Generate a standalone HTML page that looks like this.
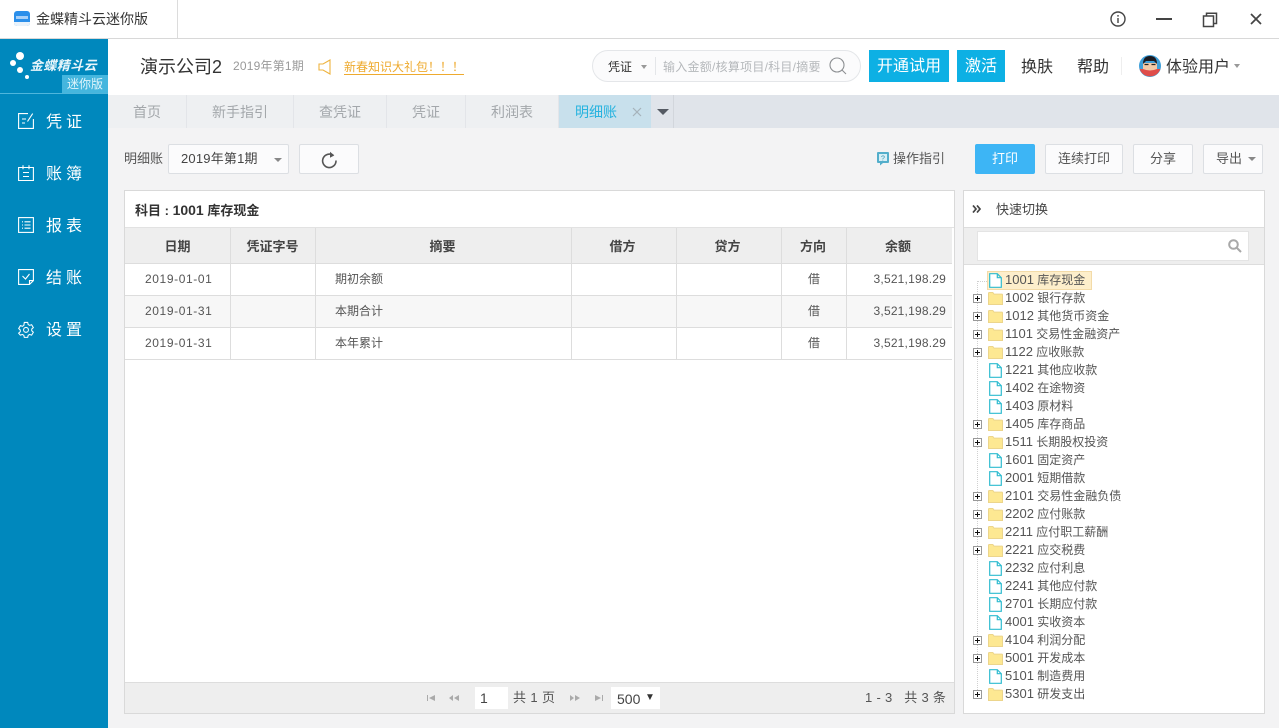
<!DOCTYPE html>
<html lang="zh">
<head>
<meta charset="utf-8">
<title>金蝶精斗云迷你版</title>
<style>
html,body{margin:0;padding:0}
body{width:1279px;height:728px;overflow:hidden;position:relative;background:#f3f3f4;font-family:"Liberation Sans","Noto Sans CJK SC",sans-serif;color:#333}
div,span,svg{position:absolute;box-sizing:border-box}
i{font-style:normal}
.t{white-space:nowrap;line-height:20px;height:20px}
.c{text-align:center}
.tab{top:95px;height:33px;background:#eef0f2;border-right:1px solid #e3e5e9;color:#a3a7ab;font-size:14px;line-height:34px;text-align:center}
.btn{background:#fbfbfc;border:1px solid #dcdfe3;border-radius:2px;font-size:13px;color:#555;text-align:center}
.blue{background:#0db0e4;color:#fff;font-size:16px;text-align:center;line-height:34px;height:32px;top:50px}
.nav{left:46px;color:#fff;font-size:16px;letter-spacing:4px;height:24px;line-height:24px;white-space:nowrap}
.th{top:228px;height:36px;line-height:37px;font-size:13px;text-align:center;color:#444;font-weight:bold;background:#eeeeee;border-right:1px solid #dddddd;border-bottom:1px solid #dddddd;padding-right:2px}
.row{left:125px;width:827px;height:32px;border-bottom:1px solid #dddddd}
.v{top:0;bottom:0;width:1px;background:#dddddd}
.cell{top:0;font-size:12px;line-height:31px;color:#555;white-space:nowrap}
.d{letter-spacing:.6px}
.a{letter-spacing:.2px}
.tn{left:1005px;font-size:12px;line-height:18px;height:18px;white-space:nowrap;color:#555}
.tn i{font-size:13px}
</style>
</head>
<body>
<svg width="0" height="0" style="left:0;top:0">
<defs>
<symbol id="folder" viewBox="0 0 15 13"><path d="M.5 12.5V1.2q0-.7.7-.7h3.6l1.2 1.6h8q.5 0 .5.6v9.8z" fill="#fde892" stroke="#ecd58c"/></symbol>
<symbol id="file" viewBox="0 0 13 15"><path d="M.7.7h7.6l4 4v9.6H.7zM8.3.7v4h4" fill="#fff" stroke="#2fbcd0" stroke-width="1.2"/></symbol>
<symbol id="plus" viewBox="0 0 9 9"><rect x=".5" y=".5" width="8" height="8" fill="#fff" stroke="#999"/><path d="M2 4.5h5M4.5 2v5" stroke="#111"/></symbol>
</defs>
</svg>

<!-- title bar -->
<div style="left:0;top:0;width:1279px;height:39px;background:#fff;border-bottom:1px solid #d8d8d8"></div>
<div style="left:177px;top:0;width:1px;height:38px;background:#dcdcdc"></div>
<div style="left:14px;top:11px;width:16px;height:15px;background:#2b8fea;border-radius:3px"></div>
<div style="left:14px;top:22px;width:16px;height:4px;background:#e8f2fb;border-radius:0 0 3px 3px"></div>
<div style="left:16px;top:16px;width:12px;height:3px;background:#a8d0f8"></div>
<div class="t" style="left:36px;top:9px;font-size:14px;color:#333">金蝶精斗云迷你版</div>
<svg style="left:1110px;top:11px" width="16" height="16" viewBox="0 0 16 16" fill="none" stroke="#444" stroke-width="1.4"><circle cx="8" cy="8" r="7"/><path d="M8 7v5M8 4v1.6"/></svg>
<div style="left:1156px;top:18px;width:16px;height:2px;background:#444"></div>
<svg style="left:1202px;top:12px" width="16" height="16" viewBox="0 0 16 16" fill="none" stroke="#444" stroke-width="1.5"><rect x="1.5" y="4" width="10" height="10.5"/><path d="M4.5 4V1.2h10v10.3h-3"/></svg>
<svg style="left:1250px;top:13px" width="12" height="12" viewBox="0 0 12 12" fill="none" stroke="#444" stroke-width="1.7"><path d="M1 1l10 10M11 1L1 11"/></svg>

<!-- header -->
<div style="left:108px;top:39px;width:1171px;height:56px;background:#fff"></div>
<div class="t" style="left:140px;top:56px;font-size:18px;line-height:22px;height:22px;color:#333">演示公司2</div>
<div class="t" style="left:233px;top:56px;font-size:12px;color:#999;letter-spacing:.2px">2019年第1期</div>
<svg style="left:318px;top:59px" width="13" height="16" viewBox="0 0 13 16" fill="none" stroke="#eeb33f" stroke-width="1.1"><path d="M12 1v14L5 11H1V5h4z"/></svg>
<div class="t" style="left:344px;top:57px;font-size:12px;color:#eeaa2e;border-bottom:1px solid #eeaa2e;height:18px;line-height:20px">新春知识大礼包！！！</div>
<div style="left:592px;top:50px;width:269px;height:32px;border:1px solid #e4e6e9;border-radius:16px;background:#fbfbfc"></div>
<div class="t" style="left:608px;top:57px;font-size:12px;color:#333">凭证</div>
<div style="left:641px;top:65px;border:3px solid transparent;border-top:4px solid #999;border-bottom:0"></div>
<div style="left:655px;top:57px;width:1px;height:18px;background:#e4e6e9"></div>
<div class="t" style="left:663px;top:57px;font-size:12px;color:#b5b8bb;letter-spacing:.25px">输入金额/核算项目/科目/摘要</div>
<svg style="left:829px;top:57px" width="18" height="18" viewBox="0 0 18 18" fill="none" stroke="#8c8f92" stroke-width="1.1"><circle cx="8" cy="8" r="7"/><path d="M13 13l4 4"/></svg>
<div class="blue" style="left:869px;width:80px">开通试用</div>
<div class="blue" style="left:957px;width:48px">激活</div>
<div class="t" style="left:1021px;top:58px;font-size:16px;color:#333">换肤</div>
<div class="t" style="left:1077px;top:58px;font-size:16px;color:#333">帮助</div>
<div style="left:1121px;top:57px;width:1px;height:18px;background:#eeeeee"></div>
<svg style="left:1139px;top:55px" width="22" height="22" viewBox="0 0 22 22"><circle cx="11" cy="11" r="11" fill="#3f9fd8"/><path d="M0.6 14h20.8A11 11 0 0 1 .6 14z" fill="#df4d4a"/><path d="M4 8h14v6q-7 3-14 0z" fill="#f3c9a6"/><path d="M4 9Q4 1 11 1t7 8l-3-3H7z" fill="#1b1b22"/><path d="M5.5 9.5h4M12.5 9.5h4" stroke="#222" stroke-width="1.2"/></svg>
<div class="t" style="left:1166px;top:58px;font-size:16px;color:#333">体验用户</div>
<div style="left:1234px;top:64px;border:3px solid transparent;border-top:4px solid #999;border-bottom:0"></div>

<!-- sidebar -->
<div style="left:0;top:39px;width:108px;height:689px;background:#0088bd"></div>
<div style="left:0;top:93px;width:108px;height:1px;background:#4fb6dc"></div>
<div style="left:16px;top:52px;width:8px;height:8px;border-radius:50%;background:#fff"></div>
<div style="left:10px;top:60px;width:6px;height:6px;border-radius:50%;background:#fff"></div>
<div style="left:17px;top:67px;width:6px;height:6px;border-radius:50%;background:#fff"></div>
<div style="left:25px;top:75px;width:4px;height:4px;border-radius:50%;background:#fff"></div>
<div class="t" style="left:30px;top:55px;font-size:13px;line-height:21px;color:#e8f6fb;font-style:italic;font-weight:bold;letter-spacing:.4px">金蝶精斗云</div>
<div class="c" style="left:62px;top:75px;width:46px;height:18px;background:#45b6de;color:#dff4fb;font-size:12px;line-height:19px">迷你版</div>

<svg style="left:18px;top:113px" width="16" height="16" viewBox="0 0 16 16" fill="none" stroke="#fff" stroke-width="1.1"><path d="M10 .6H.6v14.8h14.8V6M4 6h4M4 10h3M9.5 8.5L14.7.6"/></svg>
<div class="nav" style="top:111px">凭证</div>
<svg style="left:18px;top:165px" width="16" height="16" viewBox="0 0 16 16" fill="none" stroke="#fff" stroke-width="1.1"><path d="M.6 2.5h14.8v13H.6zM5 .3v4M11 .3v4M5 7.5h6M5 11.5h6"/></svg>
<div class="nav" style="top:163px">账簿</div>
<svg style="left:18px;top:217px" width="16" height="16" viewBox="0 0 16 16" fill="none" stroke="#fff" stroke-width="1.1"><rect x=".6" y=".6" width="14.8" height="14.8"/><path d="M4 4.8h1M6.5 4.8h6M4 8h1M6.5 8h6M4 11.2h1M6.5 11.2h6"/></svg>
<div class="nav" style="top:215px">报表</div>
<svg style="left:18px;top:269px" width="16" height="16" viewBox="0 0 16 16" fill="none" stroke="#fff" stroke-width="1.1"><path d="M11.5 15.4H.6V.6h14.8v11l-3.9 3.8v-3.8h3.9M4.5 7l3 3 4-5"/></svg>
<div class="nav" style="top:267px">结账</div>
<svg style="left:18px;top:321px" width="16" height="17" viewBox="0 0 17 17" fill="none" stroke="#fff" stroke-width="1.1"><path d="M6.7 1h3.6l.5 2.2 1.5.9 2.2-.7 1.8 3.1-1.7 1.5v1.9l1.7 1.5-1.8 3.1-2.2-.7-1.5.9-.5 2.2H6.7l-.5-2.2-1.5-.9-2.2.7L.7 12.4l1.7-1.5V9L.7 7.5l1.8-3.1 2.2.7 1.5-.9z"/><circle cx="8.5" cy="8.9" r="2.6"/></svg>
<div class="nav" style="top:319px">设置</div>

<!-- tabs -->
<div style="left:108px;top:95px;width:1171px;height:33px;background:#e0e4ea"></div>
<div class="tab" style="left:108px;width:79px">首页</div>
<div class="tab" style="left:187px;width:107px">新手指引</div>
<div class="tab" style="left:294px;width:93px">查凭证</div>
<div class="tab" style="left:387px;width:79px">凭证</div>
<div class="tab" style="left:466px;width:93px">利润表</div>
<div class="tab" style="left:559px;width:92px;background:#c8e0ec;color:#27b3df;border:0;text-align:left;padding-left:16px">明细账</div>
<svg style="left:632px;top:107px" width="10" height="10" viewBox="0 0 10 10" fill="none" stroke="#a6b3bb" stroke-width="1.2"><path d="M1 1l8 8M9 1L1 9"/></svg>
<div style="left:651px;top:95px;width:23px;height:33px;border-right:1px solid #d2d6dc"></div>
<div style="left:657px;top:109px;border:6px solid transparent;border-top:6px solid #555a63;border-bottom:0"></div>

<!-- toolbar -->
<div class="t" style="left:124px;top:149px;font-size:13px;color:#555">明细账</div>
<div style="left:168px;top:144px;width:121px;height:30px;background:#fbfbfc;border:1px solid #dcdfe3;border-radius:2px"></div>
<div class="t" style="left:181px;top:149px;font-size:13px;color:#444;letter-spacing:.2px">2019年第1期</div>
<div style="left:274px;top:158px;border:4px solid transparent;border-top:4px solid #888;border-bottom:0"></div>
<div class="btn" style="left:299px;top:144px;width:60px;height:30px"></div>
<svg style="left:321px;top:151px" width="17" height="18" viewBox="0 0 17 18" fill="none" stroke="#555" stroke-width="1.6"><path d="M12.5 4.6A6.7 6.7 0 1 0 15 9.5"/><path d="M9 .8l4.3 3.6L9 6.8" fill="#555" stroke="none"/></svg>
<svg style="left:877px;top:152px" width="12" height="14" viewBox="0 0 12 14"><path d="M1 0h10q1 0 1 1v9q0 1-1 1H6l-3 2.5V11H1q-1 0-1-1V1q0-1 1-1z" fill="#53aecb"/><rect x="2" y="2" width="8" height="7" fill="#d7eff6"/><text x="6" y="8.3" font-size="7" text-anchor="middle" fill="#2f8fad" font-family="Liberation Sans">?</text></svg>
<div class="t" style="left:893px;top:149px;font-size:13px;color:#555">操作指引</div>
<div class="c" style="left:975px;top:144px;width:60px;height:30px;background:#3db5f5;color:#fff;font-size:13px;line-height:30px;border-radius:2px">打印</div>
<div class="btn" style="left:1045px;top:144px;width:78px;height:30px;line-height:28px">连续打印</div>
<div class="btn" style="left:1133px;top:144px;width:60px;height:30px;line-height:27px">分享</div>
<div class="btn" style="left:1203px;top:144px;width:60px;height:30px;line-height:28px;text-align:left;padding-left:12px">导出</div>
<div style="left:1248px;top:157px;border:4px solid transparent;border-top:4px solid #888;border-bottom:0"></div>

<!-- main panel -->
<div style="left:124px;top:190px;width:831px;height:524px;background:#fff;border:1px solid #d9d9d9"></div>
<div class="t" style="left:135px;top:200px;font-size:13px;font-weight:bold;color:#333">科目 : <i style="font-size:14px">1001</i> 库存现金</div>
<div style="left:125px;top:227px;width:829px;height:1px;background:#e2e2e2"></div>
<div class="th" style="left:125px;width:106px;padding-right:0">日期</div>
<div class="th" style="left:231px;width:85px;padding-right:1px">凭证字号</div>
<div class="th" style="left:316px;width:256px">摘要</div>
<div class="th" style="left:572px;width:105px;padding-right:3px">借方</div>
<div class="th" style="left:677px;width:105px;padding-right:3px">贷方</div>
<div class="th" style="left:782px;width:65px">方向</div>
<div class="th" style="left:847px;width:105px;border-right:0;padding-right:3px">余额</div>

<div class="row" style="top:264px;background:#fff">
<div class="v" style="left:105px"></div><div class="v" style="left:190px"></div><div class="v" style="left:446px"></div><div class="v" style="left:551px"></div><div class="v" style="left:656px"></div><div class="v" style="left:721px"></div>
<div class="cell d" style="left:20px">2019-01-01</div><div class="cell" style="left:210px">期初余额</div><div class="cell" style="left:683px">借</div><div class="cell a" style="right:6px">3,521,198.29</div>
</div>
<div class="row" style="top:296px;background:#f7f7f7">
<div class="v" style="left:105px"></div><div class="v" style="left:190px"></div><div class="v" style="left:446px"></div><div class="v" style="left:551px"></div><div class="v" style="left:656px"></div><div class="v" style="left:721px"></div>
<div class="cell d" style="left:20px">2019-01-31</div><div class="cell" style="left:210px">本期合计</div><div class="cell" style="left:683px">借</div><div class="cell a" style="right:6px">3,521,198.29</div>
</div>
<div class="row" style="top:328px;background:#fff">
<div class="v" style="left:105px"></div><div class="v" style="left:190px"></div><div class="v" style="left:446px"></div><div class="v" style="left:551px"></div><div class="v" style="left:656px"></div><div class="v" style="left:721px"></div>
<div class="cell d" style="left:20px">2019-01-31</div><div class="cell" style="left:210px">本年累计</div><div class="cell" style="left:683px">借</div><div class="cell a" style="right:6px">3,521,198.29</div>
</div>

<!-- pagination -->
<div style="left:125px;top:682px;width:829px;height:31px;background:#eeeeee;border-top:1px solid #dddddd"></div>
<svg style="left:426px;top:694px" width="38" height="8" viewBox="0 0 38 8" fill="#aaa"><path d="M1 1h1v6H1zM3 4l6-3v6z"/><path d="M23 4l4-3v6zM28 4l5-3v6z"/></svg>
<div style="left:475px;top:687px;width:33px;height:22px;background:#fff"></div>
<div class="t" style="left:480px;top:688px;font-size:14px;color:#444">1</div>
<div class="t" style="left:513px;top:688px;font-size:13px;color:#555;letter-spacing:.4px">共 1 页</div>
<svg style="left:569px;top:694px" width="38" height="8" viewBox="0 0 38 8" fill="#aaa"><path d="M1 1l4 3-4 3zM6 1l5 3-5 3z"/><path d="M26 1l6 3-6 3zM33 1h1v6h-1z"/></svg>
<div style="left:611px;top:687px;width:49px;height:22px;background:#fff"></div>
<div class="t" style="left:617px;top:689px;font-size:14px;color:#444">500</div>
<div class="t" style="left:645px;top:688px;font-size:10px;color:#333">▼</div>
<div class="t" style="left:865px;top:688px;font-size:13px;color:#555;letter-spacing:.3px">1 - 3 &nbsp;&nbsp;共 3 条</div>

<!-- right panel -->
<div style="left:963px;top:190px;width:302px;height:524px;background:#fff;border:1px solid #d9d9d9"></div>
<svg style="left:972px;top:205px" width="9" height="8" viewBox="0 0 9 8" fill="none" stroke="#444" stroke-width="1.7"><path d="M1 .5L4 4 1 7.5M5 .5L8 4 5 7.5"/></svg>
<div class="t" style="left:996px;top:200px;font-size:13px;color:#444">快速切换</div>
<div style="left:964px;top:227px;width:300px;height:38px;background:#eeeeee;border-top:1px solid #dddddd;border-bottom:1px solid #dddddd"></div>
<div style="left:977px;top:231px;width:272px;height:30px;background:#fff;border:1px solid #e4e4e4"></div>
<svg style="left:1228px;top:239px" width="14" height="14" viewBox="0 0 14 14" fill="none" stroke="#a8a8a8" stroke-width="2"><circle cx="5.5" cy="5.5" r="4.3"/><path d="M9 9l4 4"/></svg>

<!-- tree -->
<div style="left:977px;top:281px;width:0;height:415px;border-left:1px dotted #d0d0d0"></div>
<div style="left:977px;top:281px;width:10px;height:0;border-top:1px dotted #d0d0d0"></div>
<div style="left:987px;top:271px;width:105px;height:19px;background:#fdeecb;border:1px solid #f3dba8"></div>

<svg style="left:989px;top:273px" width="13" height="15"><use href="#file"/></svg><div class="tn" style="top:271px"><i>1001</i> 库存现金</div>
<svg style="left:973px;top:294px" width="9" height="9"><use href="#plus"/></svg><svg style="left:988px;top:292px" width="15" height="13"><use href="#folder"/></svg><div class="tn" style="top:289px"><i>1002</i> 银行存款</div>
<svg style="left:973px;top:312px" width="9" height="9"><use href="#plus"/></svg><svg style="left:988px;top:310px" width="15" height="13"><use href="#folder"/></svg><div class="tn" style="top:307px"><i>1012</i> 其他货币资金</div>
<svg style="left:973px;top:330px" width="9" height="9"><use href="#plus"/></svg><svg style="left:988px;top:328px" width="15" height="13"><use href="#folder"/></svg><div class="tn" style="top:325px"><i>1101</i> 交易性金融资产</div>
<svg style="left:973px;top:348px" width="9" height="9"><use href="#plus"/></svg><svg style="left:988px;top:346px" width="15" height="13"><use href="#folder"/></svg><div class="tn" style="top:343px"><i>1122</i> 应收账款</div>
<svg style="left:989px;top:363px" width="13" height="15"><use href="#file"/></svg><div class="tn" style="top:361px"><i>1221</i> 其他应收款</div>
<svg style="left:989px;top:381px" width="13" height="15"><use href="#file"/></svg><div class="tn" style="top:379px"><i>1402</i> 在途物资</div>
<svg style="left:989px;top:399px" width="13" height="15"><use href="#file"/></svg><div class="tn" style="top:397px"><i>1403</i> 原材料</div>
<svg style="left:973px;top:420px" width="9" height="9"><use href="#plus"/></svg><svg style="left:988px;top:418px" width="15" height="13"><use href="#folder"/></svg><div class="tn" style="top:415px"><i>1405</i> 库存商品</div>
<svg style="left:973px;top:438px" width="9" height="9"><use href="#plus"/></svg><svg style="left:988px;top:436px" width="15" height="13"><use href="#folder"/></svg><div class="tn" style="top:433px"><i>1511</i> 长期股权投资</div>
<svg style="left:989px;top:453px" width="13" height="15"><use href="#file"/></svg><div class="tn" style="top:451px"><i>1601</i> 固定资产</div>
<svg style="left:989px;top:471px" width="13" height="15"><use href="#file"/></svg><div class="tn" style="top:469px"><i>2001</i> 短期借款</div>
<svg style="left:973px;top:492px" width="9" height="9"><use href="#plus"/></svg><svg style="left:988px;top:490px" width="15" height="13"><use href="#folder"/></svg><div class="tn" style="top:487px"><i>2101</i> 交易性金融负债</div>
<svg style="left:973px;top:510px" width="9" height="9"><use href="#plus"/></svg><svg style="left:988px;top:508px" width="15" height="13"><use href="#folder"/></svg><div class="tn" style="top:505px"><i>2202</i> 应付账款</div>
<svg style="left:973px;top:528px" width="9" height="9"><use href="#plus"/></svg><svg style="left:988px;top:526px" width="15" height="13"><use href="#folder"/></svg><div class="tn" style="top:523px"><i>2211</i> 应付职工薪酬</div>
<svg style="left:973px;top:546px" width="9" height="9"><use href="#plus"/></svg><svg style="left:988px;top:544px" width="15" height="13"><use href="#folder"/></svg><div class="tn" style="top:541px"><i>2221</i> 应交税费</div>
<svg style="left:989px;top:561px" width="13" height="15"><use href="#file"/></svg><div class="tn" style="top:559px"><i>2232</i> 应付利息</div>
<svg style="left:989px;top:579px" width="13" height="15"><use href="#file"/></svg><div class="tn" style="top:577px"><i>2241</i> 其他应付款</div>
<svg style="left:989px;top:597px" width="13" height="15"><use href="#file"/></svg><div class="tn" style="top:595px"><i>2701</i> 长期应付款</div>
<svg style="left:989px;top:615px" width="13" height="15"><use href="#file"/></svg><div class="tn" style="top:613px"><i>4001</i> 实收资本</div>
<svg style="left:973px;top:636px" width="9" height="9"><use href="#plus"/></svg><svg style="left:988px;top:634px" width="15" height="13"><use href="#folder"/></svg><div class="tn" style="top:631px"><i>4104</i> 利润分配</div>
<svg style="left:973px;top:654px" width="9" height="9"><use href="#plus"/></svg><svg style="left:988px;top:652px" width="15" height="13"><use href="#folder"/></svg><div class="tn" style="top:649px"><i>5001</i> 开发成本</div>
<svg style="left:989px;top:669px" width="13" height="15"><use href="#file"/></svg><div class="tn" style="top:667px"><i>5101</i> 制造费用</div>
<svg style="left:973px;top:690px" width="9" height="9"><use href="#plus"/></svg><svg style="left:988px;top:688px" width="15" height="13"><use href="#folder"/></svg><div class="tn" style="top:685px"><i>5301</i> 研发支出</div>
</body>
</html>
